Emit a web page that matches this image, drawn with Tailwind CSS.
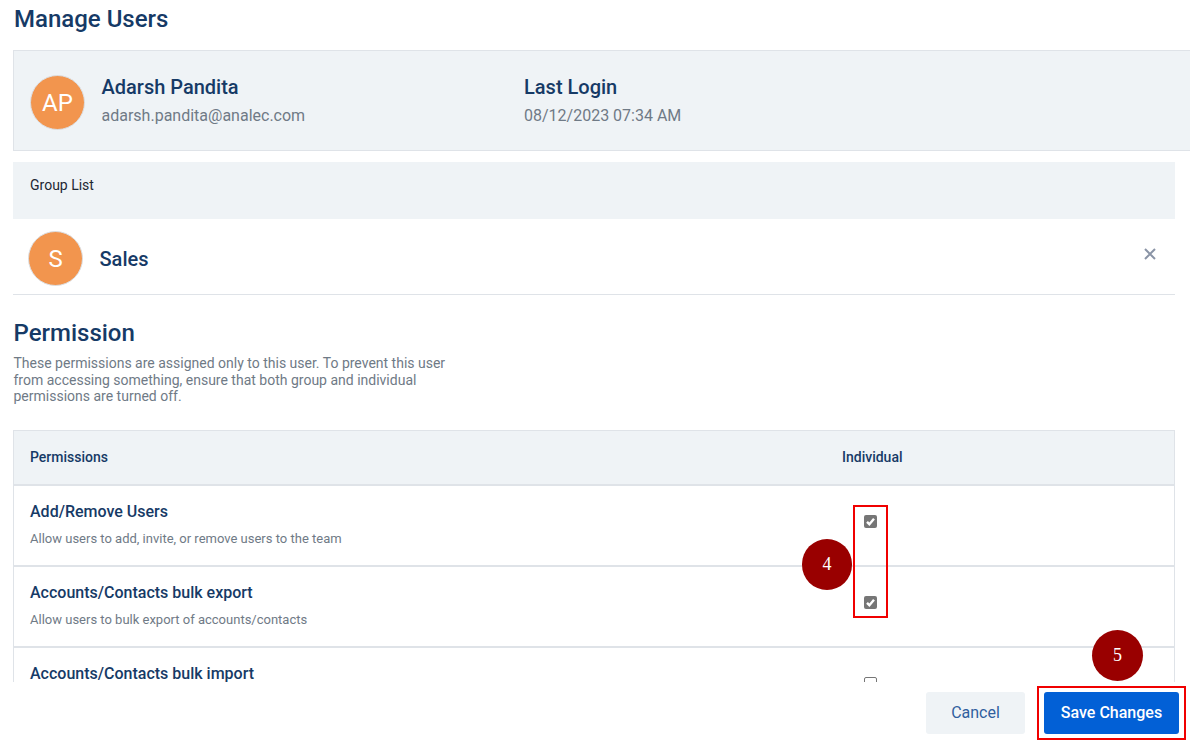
<!DOCTYPE html>
<html>
<head>
<meta charset="utf-8">
<title>Manage Users</title>
<script src="https://cdn.jsdelivr.net/npm/@tailwindcss/browser@4"></script>
</head>
<body class="bg-white font-['Roboto',sans-serif] overflow-hidden">
<div class="relative w-[1190px] h-[751px] overflow-hidden">
	<div class="h-[682px] overflow-hidden pl-[13px]">
		<h1 class="h-[50px] pt-[5px] pl-px text-[24px] leading-[28px] font-medium text-[#163a66]">Manage Users</h1>

		<div class="flex h-[101px] border border-r-0 border-[#dfe3e8] bg-[#eff3f6]">
			<div class="flex w-[510px] items-center pl-4 pt-1">
				<div class="flex h-[55px] w-[55px] items-center justify-center rounded-full border border-[#dcdfe3] bg-[#f2954e] text-[24px] text-white">AP</div>
				<div class="ml-[16.5px] -mt-1">
					<div class="text-[20px] leading-[26px] font-medium text-[#163a66]">Adarsh Pandita</div>
					<div class="mt-[5px] text-[16px] leading-[22px] text-[#6f7a86]">adarsh.pandita@analec.com</div>
				</div>
			</div>
			<div class="flex flex-col justify-center">
				<div class="text-[20px] leading-[26px] font-medium text-[#163a66]">Last Login</div>
				<div class="mt-[5px] text-[16px] leading-[22px] text-[#6f7a86]">08/12/2023 07:34 AM</div>
			</div>
		</div>

		<div class="mt-[11px] h-[57px] w-[1162px] bg-[#eff3f6] pl-[17px] pt-[14px] text-[14px] leading-[18px] text-[#1d2733]">Group List</div>

		<div class="flex h-[76px] w-[1162px] items-center border-b border-[#dfe3e8] pl-[15px] pr-[19px] pt-1">
			<div class="flex h-[55px] w-[55px] items-center justify-center rounded-full border border-[#dcdfe3] bg-[#f2954e] text-[24px] text-white">S</div>
			<div class="ml-[16.5px] text-[20px] font-medium text-[#163a66]">Sales</div>
			<svg class="ml-auto -mt-[9px]" width="12" height="12" viewBox="0 0 12 12" fill="none" stroke="#8a94a6" stroke-width="2"><path d="M1 1l10 10M11 1L1 11"/></svg>
		</div>

		<h2 class="mt-[22px] pl-[0.5px] text-[24px] leading-[32px] font-medium text-[#163a66]">Permission</h2>
		<p class="mt-[6px] w-[450px] pl-[0.5px] text-[14px] leading-[16.5px] text-[#6f7a86]">These permissions are assigned only to this user. To prevent this user from accessing something, ensure that both group and individual permissions are turned off.</p>

		<div class="mt-[25px] w-[1162px] border-x border-t border-[#dfe3e8]">
			<div class="flex h-[55px] items-center border-b-2 border-[#dfe3e8] bg-[#eff3f6] text-[14px] font-medium">
				<div class="w-[828px] pl-4 text-[#163a66]">Permissions</div>
				<div class="text-[#163a66]">Individual</div>
			</div>
			<div class="flex h-[81px] border-b-2 border-[#dfe3e8]">
				<div class="w-[850px] pl-4 pt-[16px]">
					<div class="text-[16px] leading-[20px] font-medium text-[#163a66]">Add/Remove Users</div>
					<div class="mt-[8px] text-[13px] leading-[18px] text-[#6f7a86]">Allow users to add, invite, or remove users to the team</div>
				</div>
				<div class="pt-[29px]">
					<div class="flex h-[13px] w-[13px] items-center justify-center rounded-[2px] bg-[#767676]">
						<svg width="11" height="11" viewBox="0 0 11 11" fill="none" stroke="#fff" stroke-width="2.4"><path d="M2 5.8l2.4 2.4L9 2.8"/></svg>
					</div>
				</div>
			</div>
			<div class="flex h-[81px] border-b-2 border-[#dfe3e8]">
				<div class="w-[850px] pl-4 pt-[16px]">
					<div class="text-[16px] leading-[20px] font-medium text-[#163a66]">Accounts/Contacts bulk export</div>
					<div class="mt-[8px] text-[13px] leading-[18px] text-[#6f7a86]">Allow users to bulk export of accounts/contacts</div>
				</div>
				<div class="pt-[29px]">
					<div class="flex h-[13px] w-[13px] items-center justify-center rounded-[2px] bg-[#767676]">
						<svg width="11" height="11" viewBox="0 0 11 11" fill="none" stroke="#fff" stroke-width="2.4"><path d="M2 5.8l2.4 2.4L9 2.8"/></svg>
					</div>
				</div>
			</div>
			<div class="flex h-[81px]">
				<div class="w-[850px] pl-4 pt-[16px]">
					<div class="text-[16px] leading-[20px] font-medium text-[#163a66]">Accounts/Contacts bulk import</div>
				</div>
				<div class="pt-[29px]">
					<div class="h-[13px] w-[13px] rounded-[2px] border border-[#767676] bg-white"></div>
				</div>
			</div>
		</div>
	</div>

	<div class="flex h-[69px] justify-end gap-[19px] bg-white pr-[11px] pt-[10px]">
		<button class="h-[42px] w-[99px] rounded-[3px] bg-[#eff3f6] text-[16px] text-[#2f5f9e]">Cancel</button>
		<button class="h-[42px] w-[135px] rounded-[3px] bg-[#0260d6] text-[16px] font-medium text-white">Save Changes</button>
	</div>

	<!-- annotations on top of the screenshot -->
	<div class="absolute left-[853px] top-[505px] h-[113px] w-[35px] border-2 border-[#f00000]"></div>
	<div class="absolute left-[1037px] top-[686px] h-[54px] w-[149px] border-2 border-[#f00000]"></div>
	<div class="absolute left-[802px] top-[539px] flex h-[51px] w-[50px] items-center justify-center rounded-full bg-[#990000] font-['Liberation_Serif',serif] text-[18px] text-white">4</div>
	<div class="absolute left-[1092px] top-[630px] flex h-[51px] w-[51px] items-center justify-center rounded-full bg-[#990000] font-['Liberation_Serif',serif] text-[18px] text-white">5</div>
</div>
</body>
</html>
